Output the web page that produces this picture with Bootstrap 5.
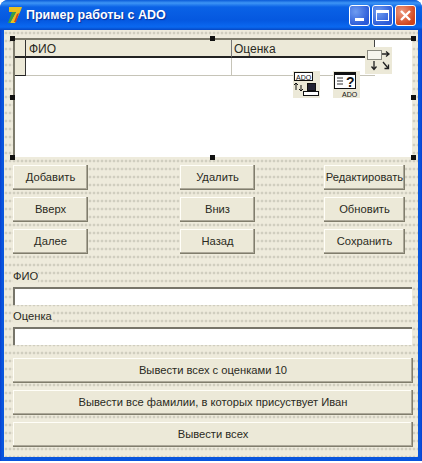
<!DOCTYPE html>
<html lang="ru">

<head>
    <meta charset="UTF-8">
    <meta name="viewport" content="width=device-width, initial-scale=1.0">
    <title>Пример работы с ADO</title>
    <link href="https://cdn.jsdelivr.net/npm/bootstrap@5.3.0/dist/css/bootstrap.min.css" rel="stylesheet">
    <style>
        body {
            margin: 0;
            width: 422px;
            height: 463px;
            overflow: hidden;
            background-color: #fff;
            font-family: "Liberation Sans", Arial, sans-serif;
            font-size: 11.2px;
            color: #2a2a22;
        }

        .xp-window {
            width: 422px;
            height: 461px;
            background: linear-gradient(90deg, #0a3fd0, #0855dd 2px, #0855dd 420px, #0a3fd0);
            border-radius: 8px 8px 0 0;
            padding: 0 4px 4px;
        }

        .xp-title {
            height: 30px;
            margin: 0 -4px;
            padding: 0 6px 0 7px;
            border-radius: 8px 8px 0 0;
            background: linear-gradient(180deg, #0a5bd8 0, #3d95f5 3px, #0a62e6 7px, #0558e0 20px, #0a68f0 27px, #0648c4 30px);
        }

        .xp-title-text {
            color: #fff;
            font-weight: 700;
            font-size: 12.5px;
            margin-left: 2px;
            text-shadow: 1px 1px 1px #0a2f98;
        }

        .xp-ctls {
            gap: 2px;
        }

        .xp-ctl {
            width: 21px;
            height: 21px;
            padding: 0;
            border: 1px solid #fff;
            border-radius: 3px;
            background: radial-gradient(circle at 30% 30%, #6f9cf0, #2a5ad8 75%);
        }

        .xp-ctl-close {
            background: radial-gradient(circle at 30% 30%, #ee9a80, #d0441c 75%);
        }

        .form-area {
            height: 427px;
            padding: 8px 0 0 9px;
            background-color: #eeebdc;
            background-image: radial-gradient(circle at 2px 2px, #d0cebf 0.8px, rgba(238, 235, 220, 0) 1.8px);
            background-size: 4px 8px;
            background-position: 0 1px;
        }

        .grid-box {
            height: 119px;
            width: 399px;
            background-color: #fff;
            border-top: 2px solid #7d7b6c;
            border-left: 2px solid #7d7b6c;
        }

        .grid-head {
            height: 18px;
        }

        .grid-row {
            height: 18px;
        }

        .grid-head > div {
            background-color: #ece9d8;
            border-bottom: 2px solid #222;
        }

        .grid-row > div {
            border-bottom: 1px solid #c6c4b8;
        }

        .grid-ind {
            width: 11px;
            flex: none;
            border-right: 1px solid #333;
        }

        .grid-row > .grid-ind {
            background-color: #ece9d8;
            border-bottom: 1px solid #222;
        }

        .grid-fio {
            width: 206px;
            flex: none;
            padding-left: 3px;
            font-size: 12px;
            border-right: 1px solid #777;
        }

        .grid-row .grid-fio {
            border-right: 1px solid #c6c4b8;
        }

        .grid-mark {
            width: 143px;
            flex: none;
            padding-left: 2px;
            font-size: 12px;
            border-right: 1px solid #444;
        }

        .grid-row .grid-mark {
            border-right: 0;
        }

        .sel-handle {
            position: absolute;
            width: 5px;
            height: 5px;
            background-color: #111;
        }

        .h-left { left: 10px; }
        .h-mid { left: 210px; }
        .h-right { left: 411px; }
        .h-top { top: 36px; }
        .h-center { top: 95px; }
        .h-bottom { top: 155px; }

        .ado-comp {
            position: absolute;
            width: 27px;
            height: 27px;
            background-color: #ece9d8;
        }

        .comp-move { left: 365px; top: 47px; }
        .comp-conn { left: 293px; top: 71px; }
        .comp-query { left: 333px; top: 71px; }

        .btn.win-btn {
            --bs-btn-padding-x: 0;
            --bs-btn-padding-y: 0;
            --bs-btn-font-size: 11.2px;
            --bs-btn-color: #2a2a22;
            --bs-btn-hover-color: #2a2a22;
            --bs-btn-bg: #ece9d8;
            --bs-btn-hover-bg: #ece9d8;
            --bs-btn-border-radius: 0;
            --bs-btn-border-width: 0;
            height: 25px;
            font-family: "Liberation Sans", Arial, sans-serif;
            white-space: nowrap;
            box-shadow: inset -1px -1px 0 #807d6c, inset -2px -2px 0 #aca899, inset 1px 1px 0 #fffef8;
        }

        .btn-small {
            width: 75px;
        }

        .btn-wide {
            width: 81px;
            margin-left: 69px;
        }

        .btn-middle {
            margin-left: 92px;
        }

        .btn-rows {
            margin-top: 8px;
            row-gap: 7px;
        }

        .edit-label {
            line-height: 13px;
            background-color: #ece9d8;
            display: table;
        }

        .label-fio {
            margin-top: 16px;
        }

        .label-mark {
            margin-top: 5px;
        }

        .win-edit {
            height: 18px;
            width: 399px;
            margin-top: 4px;
            padding: 0 2px;
            background-color: #fff;
            border-radius: 0;
            border: 0;
            border-top: 2px solid #77756a;
            border-left: 2px solid #77756a;
            display: block;
            box-sizing: border-box;
        }

        .btn-big-list {
            margin-top: 13px;
            gap: 7px;
        }

        .btn-big {
            width: 400px;
        }
    </style>
</head>

<body>
    <div class="xp-window position-relative">
        <div class="xp-title d-flex align-items-center">
            <svg width="17" height="20" viewBox="0 0 17 20" class="flex-shrink-0">
                <path d="M2 2h13l-1 3-6 13H3l6-11H2z" fill="#e8c020" />
                <path d="M5 7h4L3 18H1z" fill="#3aa040" />
                <path d="M10 9l2-1-3 9H7z" fill="#d04020" />
            </svg>
            <span class="xp-title-text flex-grow-1">Пример работы с ADO</span>
            <div class="xp-ctls d-flex ms-auto">
                <button class="xp-ctl d-flex align-items-end justify-content-center pb-1">
                    <svg width="9" height="3"><rect width="9" height="3" fill="#fff" /></svg>
                </button>
                <button class="xp-ctl d-flex align-items-center justify-content-center">
                    <svg width="13" height="11"><rect x=".5" y="1.5" width="12" height="9" fill="none" stroke="#fff" /><rect width="13" height="3" fill="#fff" /></svg>
                </button>
                <button class="xp-ctl xp-ctl-close d-flex align-items-center justify-content-center">
                    <svg width="11" height="11"><path d="M1 1l9 9M10 1l-9 9" stroke="#fff" stroke-width="2.4" /></svg>
                </button>
            </div>
        </div>

        <div class="form-area">
            <div class="grid-box">
                <div class="grid-head d-flex">
                    <div class="grid-ind"></div>
                    <div class="grid-fio">ФИО</div>
                    <div class="grid-mark">Оценка</div>
                </div>
                <div class="grid-row d-flex">
                    <div class="grid-ind"></div>
                    <div class="grid-fio"></div>
                    <div class="grid-mark"></div>
                </div>
            </div>

            <div class="btn-rows d-flex flex-column">
                <div class="d-flex">
                    <button class="btn win-btn btn-small">Добавить</button>
                    <button class="btn win-btn btn-small btn-middle">Удалить</button>
                    <button class="btn win-btn btn-wide">Редактировать</button>
                </div>
                <div class="d-flex">
                    <button class="btn win-btn btn-small">Вверх</button>
                    <button class="btn win-btn btn-small btn-middle">Вниз</button>
                    <button class="btn win-btn btn-wide">Обновить</button>
                </div>
                <div class="d-flex">
                    <button class="btn win-btn btn-small">Далее</button>
                    <button class="btn win-btn btn-small btn-middle">Назад</button>
                    <button class="btn win-btn btn-wide">Сохранить</button>
                </div>
            </div>

            <div class="edit-label label-fio">ФИО</div>
            <input class="win-edit" type="text">
            <div class="edit-label label-mark">Оценка</div>
            <input class="win-edit" type="text">

            <div class="btn-big-list d-flex flex-column">
                <button class="btn win-btn btn-big">Вывести всех с оценками 10</button>
                <button class="btn win-btn btn-big">Вывести все фамилии, в которых присуствует Иван</button>
                <button class="btn win-btn btn-big">Вывести всех</button>
            </div>
        </div>

        <!-- маркеры выделения грида -->
        <span class="sel-handle h-left h-top"></span>
        <span class="sel-handle h-mid h-top"></span>
        <span class="sel-handle h-right h-top"></span>
        <span class="sel-handle h-left h-center"></span>
        <span class="sel-handle h-right h-center"></span>
        <span class="sel-handle h-left h-bottom"></span>
        <span class="sel-handle h-mid h-bottom"></span>
        <span class="sel-handle h-right h-bottom"></span>

        <!-- невизуальные компоненты ADO -->
        <div class="ado-comp comp-move">
            <svg width="27" height="27" viewBox="0 0 27 27">
                <rect x="2.500" y="3.500" width="14" height="9" fill="#f6f5ee" stroke="#8a8a80" />
                <path d="M17 7h6M21 4.500l3 2.500-3 2.500" stroke="#222" fill="none" stroke-width="1.300" />
                <path d="M9 14v8M6.500 19.500l2.500 3 2.500-3" stroke="#222" fill="none" stroke-width="1.300" />
                <path d="M18 15l5 6M19.500 21.500h4v-4" stroke="#222" fill="none" stroke-width="1.300" />
            </svg>
        </div>
        <div class="ado-comp comp-conn">
            <svg width="27" height="27" viewBox="0 0 27 27">
                <rect x="1.500" y="1.500" width="18" height="8" fill="#fff" stroke="#111" />
                <text x="3" y="8.500" font-size="7" font-family="Liberation Sans" fill="#111">ADO</text>
                <path d="M3 12v7M1 14l2-2 2 2M8 20v-6M6 18l2 2 2-2" stroke="#111" fill="none" />
                <rect x="14.500" y="12.500" width="8" height="7" fill="#223" stroke="#111" />
                <rect x="10.500" y="20.500" width="15" height="4" fill="#fff" stroke="#111" />
            </svg>
        </div>
        <div class="ado-comp comp-query">
            <svg width="27" height="27" viewBox="0 0 27 27">
                <rect x="1.500" y="1.500" width="21" height="16" fill="#fff" stroke="#111" />
                <rect x="1" y="1" width="22" height="3" fill="#111" />
                <path d="M4 7h6M4 10h6M4 13h6" stroke="#333" />
                <text x="13" y="16" font-size="14" font-weight="700" font-family="Liberation Sans" fill="#111">?</text>
                <text x="9" y="26" font-size="7" font-family="Liberation Sans" fill="#111">ADO</text>
            </svg>
        </div>
    </div>
    <script src="https://cdn.jsdelivr.net/npm/bootstrap@5.3.0/dist/js/bootstrap.bundle.min.js"></script>
</body>

</html>
